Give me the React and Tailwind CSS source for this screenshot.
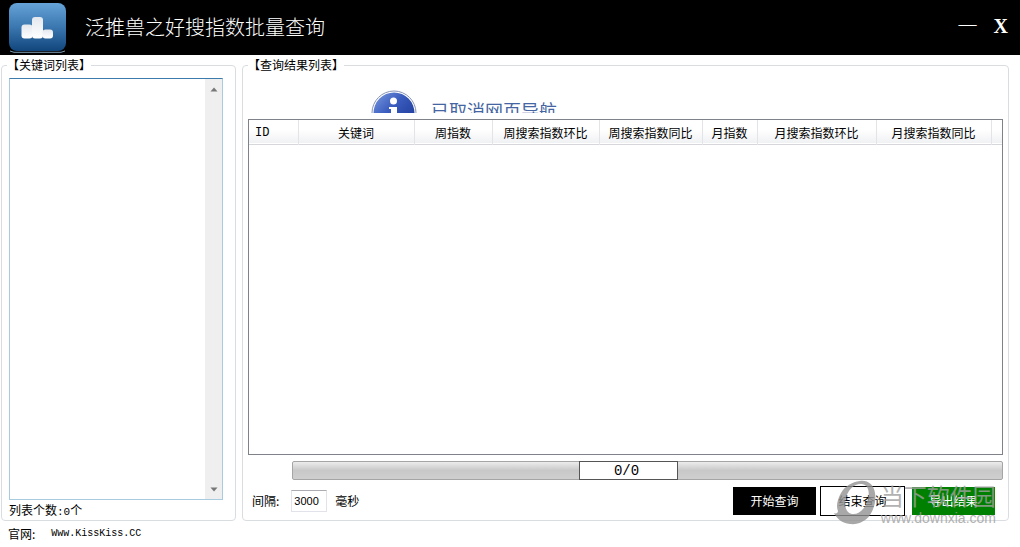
import { useState } from "react";

const columns = [
  { name: "ID", width: "w-[49px]", align: "text-left pl-1.5 font-['Liberation_Mono','Noto_Sans_CJK_SC',monospace]" },
  { name: "关键词", width: "w-[116px]", align: "text-center" },
  { name: "周指数", width: "w-[78px]", align: "text-center" },
  { name: "周搜索指数环比", width: "w-[107px]", align: "text-center" },
  { name: "周搜索指数同比", width: "w-[103px]", align: "text-center" },
  { name: "月指数", width: "w-[55px]", align: "text-center" },
  { name: "月搜索指数环比", width: "w-[119px]", align: "text-center" },
  { name: "月搜索指数同比", width: "w-[115px]", align: "text-center" },
];

function AppLogo() {
  return (
    <svg viewBox="0 0 58 50" className="h-[50px] w-[58px]" aria-hidden="true">
      <defs>
        <linearGradient id="logoBg" x1="0" y1="0" x2="0" y2="1">
          <stop offset="0" stopColor="#66a3d8" />
          <stop offset="0.5" stopColor="#3b77b0" />
          <stop offset="1" stopColor="#11467c" />
        </linearGradient>
        <linearGradient id="logoBar" x1="0" y1="0" x2="0" y2="1">
          <stop offset="0" stopColor="#e3e8ee" />
          <stop offset="1" stopColor="#ffffff" />
        </linearGradient>
      </defs>
      <path d="M2 48 L6 49.300 H53 L57 48" fill="none" stroke="#7f9bb3" strokeWidth="1" />
      <rect x="1" y="0" width="57" height="48" rx="8" fill="url(#logoBg)" />
      <rect x="13.500" y="21.500" width="11" height="14" rx="3" fill="url(#logoBar)" />
      <rect x="24" y="14" width="11" height="21.500" rx="3" fill="url(#logoBar)" />
      <rect x="34.500" y="26.500" width="10.500" height="9" rx="3" fill="url(#logoBar)" />
    </svg>
  );
}

function InfoIcon() {
  return (
    <svg viewBox="0 0 46 46" className="h-[46px] w-[46px] shrink-0" aria-hidden="true">
      <defs>
        <linearGradient id="infoBg" x1="0" y1="0" x2="1" y2="1">
          <stop offset="0" stopColor="#7c9be0" />
          <stop offset="0.400" stopColor="#3a5cbe" />
          <stop offset="1" stopColor="#142f8c" />
        </linearGradient>
      </defs>
      <circle cx="23" cy="23" r="22" fill="#fff" stroke="#8793b5" strokeWidth="1" />
      <circle cx="23" cy="23" r="20.500" fill="url(#infoBg)" />
      <circle cx="22.500" cy="11" r="3.500" fill="#fff" />
      <path d="M18 17 H26 V34 H29 V36 H17 V34 H20 V19 H18 Z" fill="#fff" />
    </svg>
  );
}

function Arrow({ down }) {
  return (
    <svg viewBox="0 0 8 5" className="h-[5px] w-2" aria-hidden="true">
      <path d={down ? "M0.500 0.500 H7.500 L4 4.500 Z" : "M0.500 4.500 H7.500 L4 0.500 Z"} fill="#777" />
    </svg>
  );
}

function Watermark() {
  return (
    <div className="pointer-events-none absolute right-6 bottom-[21px] flex items-start gap-1 text-[#a0a0a0] opacity-80">
      <svg viewBox="0 0 44 46" className="h-[46px] w-11" aria-hidden="true">
        <path
          fill="#939393"
          fillRule="evenodd"
          d="M27 1 C35 0 41 5 42 13 C43 20 42 27 37 35 C33 41 25 45 17 44 C9 43 4 39 1 33 C3 34 5 33 5 31 C3 27 4 20 8 13 C12 6 19 2 27 1 Z M29 4 C22 3 15 9 13 18 C11 26 13 33 19 34 C26 35 33 28 35 19 C37 11 35 5 29 4 Z"
        />
      </svg>
      <div className="flex flex-col">
        <span className="text-[23px] leading-[30px]">当下软件园</span>
        <span className="font-['Liberation_Sans',sans-serif] text-[14px] leading-4">www.downxia.com</span>
      </div>
    </div>
  );
}

export default function App() {
  const [keywords, setKeywords] = useState("");
  const [interval, setIntervalMs] = useState("3000");

  return (
    <div className="relative flex min-h-screen flex-col bg-white font-['Noto_Sans_CJK_SC',sans-serif] text-[12px] leading-[14px] text-black">
      <header className="flex h-[55px] items-center bg-black pr-3 pl-2 text-white">
        <AppLogo />
        <h1 className="ml-[19px] pb-0.5 text-[20px] leading-6 font-light">泛推兽之好搜指数批量查询</h1>
        <div className="ml-auto flex items-center gap-4 pb-1 text-[20px] leading-6">
          <button type="button" aria-label="最小化" className="font-light">一</button>
          <button type="button" aria-label="关闭" className="font-['Liberation_Serif',serif] font-bold">X</button>
        </div>
      </header>

      <main className="flex flex-1 gap-1.5 pt-[3px] pr-[11px] pl-px">
        <fieldset className="flex w-[235px] shrink-0 flex-col rounded-[4px] border border-[#d9dde0] pr-3 pl-[7px]">
          <legend className="-ml-0.5">【关键词列表】</legend>
          <div className="mt-1.5 flex flex-1 border border-[#a9cbe0] border-t-[#3d7bad]">
            <textarea
              aria-label="关键词列表"
              value={keywords}
              onChange={(e) => setKeywords(e.target.value)}
              className="min-w-0 flex-1 resize-none overflow-hidden p-1 outline-none"
            />
            <div className="flex w-[17px] flex-col justify-between bg-[#efefef]">
              <button type="button" aria-label="向上滚动" className="flex h-5 items-center justify-center"><Arrow /></button>
              <button type="button" aria-label="向下滚动" className="flex h-5 items-center justify-center"><Arrow down /></button>
            </div>
          </div>
          <p className="pt-0.5 leading-4">列表个数<span className="font-['Liberation_Mono',monospace] text-[11px]">:0</span>个</p>
        </fieldset>

        <fieldset className="flex min-w-0 flex-1 flex-col rounded-[4px] border border-[#d9dde0] px-[5px] pb-1">
          <legend>【查询结果列表】</legend>
          <div className="flex h-[41px] items-start gap-3.5 overflow-hidden pt-[18px] pl-[123px]">
            <InfoIcon />
            <span className="pt-2 text-[18px] leading-6 text-[#4465a2]">已取消网页导航</span>
          </div>

          <div className="mt-1.5 flex-1 border border-[#7f8288]">
            <table className="w-full table-fixed border-collapse">
              <thead>
                <tr className="h-6 border-b border-[#d5d7da] bg-linear-to-b from-white from-40% to-[#f0f1f3]">
                  {columns.map((c) => (
                    <th key={c.name} scope="col" className={`border-r border-[#e2e4e7] p-0 pt-0.5 font-normal whitespace-nowrap ${c.width} ${c.align}`}>
                      {c.name}
                    </th>
                  ))}
                  <td className="p-0" />
                </tr>
              </thead>
              <tbody />
            </table>
          </div>

          <div
            role="progressbar"
            aria-label="查询进度"
            aria-valuenow={0}
            className="mt-1.5 ml-11 flex h-[19px] justify-center rounded-[2px] border border-[#a5a5a5] bg-linear-to-b from-[#ececec] via-[#c8c8c8] to-[#cfcfcf] pr-[38px]"
          >
            <span className="-my-px w-[99px] border border-[#555] bg-white pr-1 text-center font-['Liberation_Mono',monospace] text-[14px] leading-[18px]">0/0</span>
          </div>

          <div className="mt-1.5 flex items-center pr-2 pl-1">
            <label htmlFor="interval">间隔:</label>
            <input
              id="interval"
              value={interval}
              onChange={(e) => setIntervalMs(e.target.value)}
              className="ml-3 h-[22px] w-9 border border-[#e2e3ea] border-t-[#abadb3] px-0.5 font-['Liberation_Sans',sans-serif] text-[11px] outline-none"
            />
            <span className="ml-2">毫秒</span>
            <div className="ml-auto flex items-center">
              <button type="button" className="h-7 w-[83px] bg-black text-white">开始查询</button>
              <button type="button" className="ml-1 h-[30px] w-[85px] border border-black bg-white">结束查询</button>
              <button type="button" className="ml-[7px] h-7 w-[83px] bg-[#008000] text-white">导出结果</button>
            </div>
          </div>
        </fieldset>
      </main>

      <footer className="flex h-[26px] items-center gap-4 pl-2">
        <span>官网:</span>
        <a href="http://www.kisskiss.cc" className="font-['Liberation_Mono',monospace] text-[10px]">Www.KissKiss.CC</a>
      </footer>

      <Watermark />
    </div>
  );
}
